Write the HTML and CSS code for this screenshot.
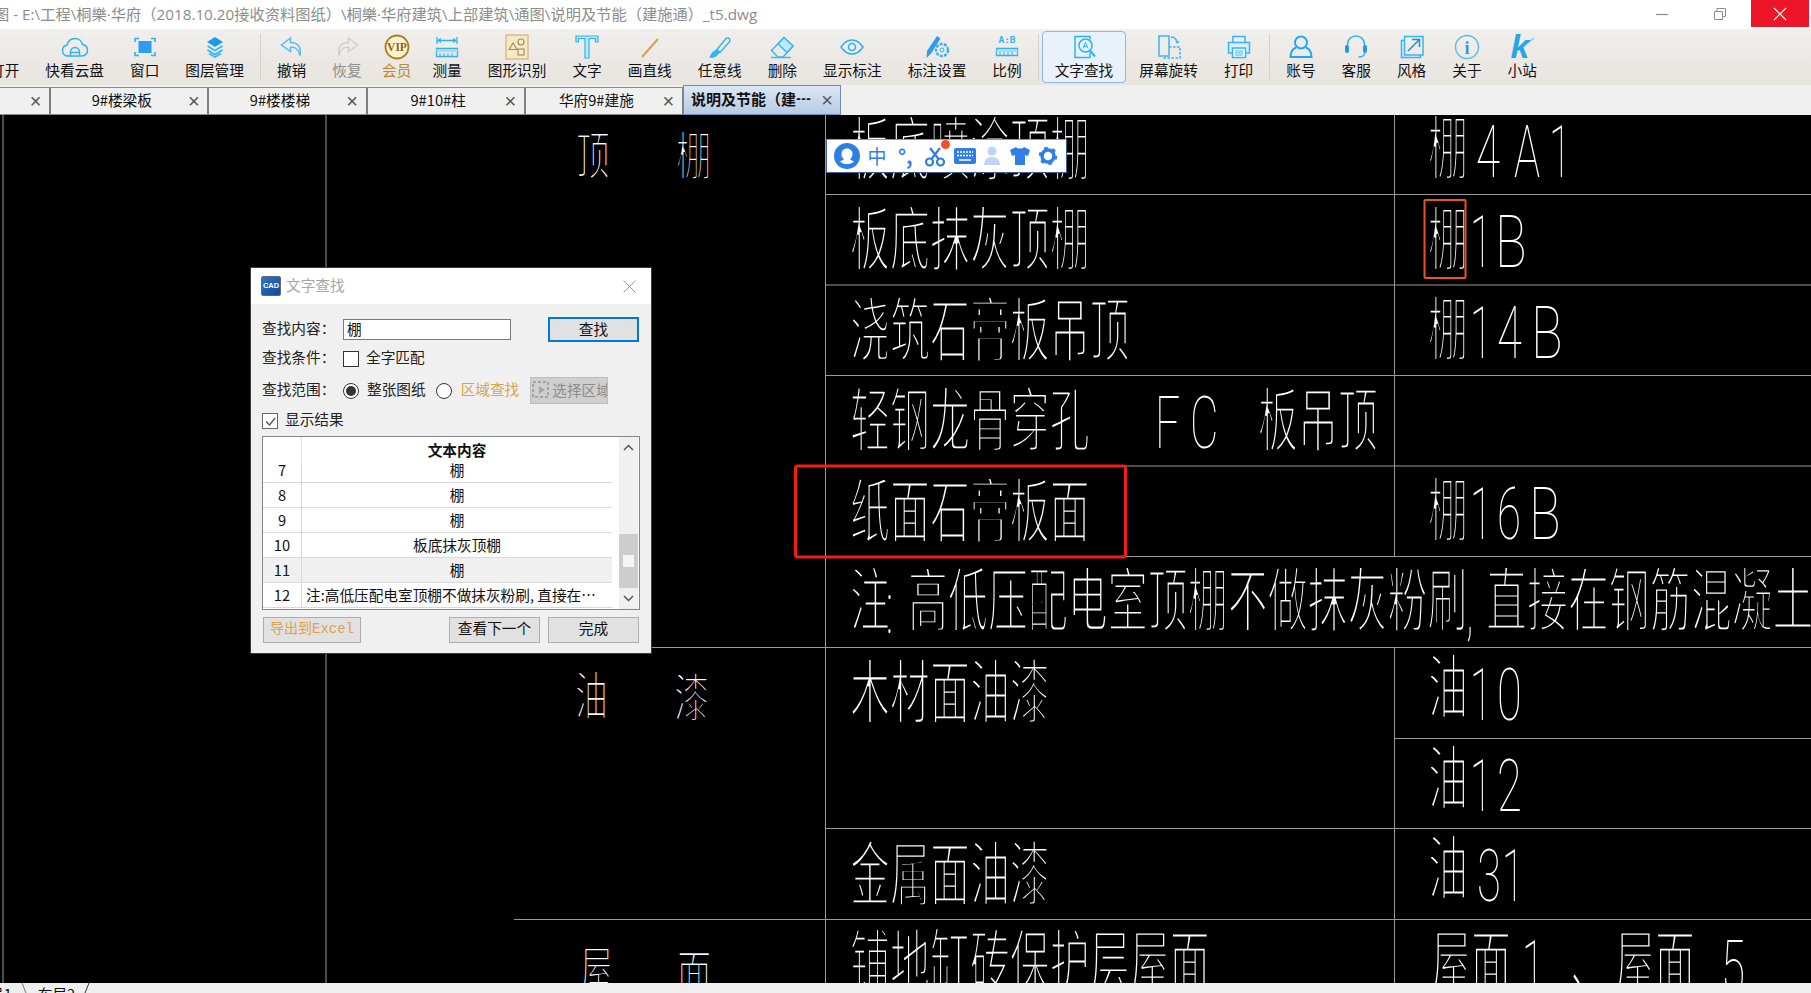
FILE: index.html
```html
<!DOCTYPE html>
<html lang="zh-CN">
<head>
<meta charset="utf-8">
<title>文字查找</title>
<link rel="stylesheet" href="styles.css">
</head>
<body>
<div class="app">
  <header class="titlebar">
    <div class="title">图 - E:\工程\桐樂·华府（2018.10.20接收资料图纸）\桐樂·华府建筑\上部建筑\通图\说明及节能（建施通）_t5.dwg</div>
    <div class="winctl">
      <svg class="wc wc-min" width="14" height="14" viewBox="0 0 14 14"><path d="M1 7.500h12" stroke="#8e8e8e" stroke-width="1.200"/></svg>
      <svg class="wc wc-max" width="14" height="14" viewBox="0 0 14 14"><path d="M1.500 4.500h8v8h-8zM4 4.500V1.500h8.500v8H9.500" fill="none" stroke="#8e8e8e"/></svg>
      <div class="wc-close"><svg width="14" height="14" viewBox="0 0 14 14"><path d="M1 1l12 12M13 1L1 13" stroke="#fff" stroke-width="1.200"/></svg></div>
    </div>
  </header>

  <nav class="toolbar">
    <div class="tool"><span class="ic"></span><span class="lb">打开</span></div>
    <div class="tool"><span class="ic"><svg width="28" height="24" viewBox="0 0 28 24" fill="none" stroke="#2db2f2" stroke-width="1.500"><path d="M7 21c-3.500 0-5.500-2.500-5.500-5.500 0-3 2-5 4.500-5.300C7 6 10 3.500 14 3.500c4 0 7 2.700 7.700 6.300 2.800.3 4.800 2.600 4.800 5.500 0 3-2.200 5.700-5.500 5.700z"/><path d="M9.500 20.500v-3.500c0-2.500 2-4.500 4.500-4.500s4.500 2 4.500 4.500v3.500M9.500 17.500h9"/></svg></span><span class="lb">快看云盘</span></div>
    <div class="tool"><span class="ic"><svg width="26" height="24" viewBox="0 0 26 24" fill="none" stroke="#2db2f2" stroke-width="1.600"><path d="M3 7V3.500h4M19 3.500h4V7M23 17v3.500h-4M7 20.500H3V17"/><rect x="6.500" y="6" width="13" height="12" fill="#2d9df2" stroke="none"/></svg></span><span class="lb">窗口</span></div>
    <div class="tool"><span class="ic"><svg width="26" height="24" viewBox="0 0 26 24"><path d="M13 2l8 5-8 5-8-5z" fill="#1e9be8"/><path d="M5.500 11l7.500 4.500 7.500-4.500M5.500 15l7.500 4.500 7.500-4.500M7 18.500l6 3.500 6-3.500" fill="none" stroke="#35b5f5" stroke-width="1.800"/></svg></span><span class="lb">图层管理</span></div>
    <span class="sep"></span>
    <div class="tool"><span class="ic"><svg width="26" height="24" viewBox="0 0 26 24" fill="none" stroke="#57bdf2" stroke-width="1.500"><path d="M11.500 3L2.500 10l9 6.500v-4.200c5.500-.5 8 2 9.500 8.200 1.500-7.500-1.500-13-9.500-13z"/></svg></span><span class="lb">撤销</span></div>
    <div class="tool"><span class="ic"><svg width="26" height="24" viewBox="0 0 26 24" fill="none" stroke="#cfcfcf" stroke-width="1.500"><path d="M14.500 3l9 7-9 6.500v-4.200c-5.500-.5-8 2-9.500 8.200-1.500-7.500 1.500-13 9.500-13z"/></svg></span><span class="lb dim">恢复</span></div>
    <div class="tool t-vip"><span class="ic"><svg width="26" height="26" viewBox="0 0 26 26"><circle cx="13" cy="13" r="11.500" fill="#fff3d2" stroke="#ad7e22" stroke-width="1.800"/><text x="13" y="17" text-anchor="middle" class="vip">VIP</text></svg></span><span class="lb gold">会员</span></div>
    <div class="tool t-meas"><span class="ic"><svg width="26" height="24" viewBox="0 0 26 24" fill="none" stroke="#2db2f2" stroke-width="1.300"><path d="M3 2v7M23 2v7M4 5.500h18M4 5.500l3-2M4 5.500l3 2M22 5.500l-3-2M22 5.500l-3 2"/><path d="M2.500 13.500h21v8h-21z"/><path d="M2.500 15.500h21" stroke="#a6dcf6" stroke-width="3"/><path d="M6 18v3M10 18v3M14 18v3M18 18v3" stroke-width="1"/></svg></span><span class="lb">测量</span></div>
    <div class="tool"><span class="ic"><svg width="24" height="26" viewBox="0 0 24 26"><rect x="1" y="1" width="22" height="24" fill="#f5e9c8" stroke="#c9a866"/><g fill="none" stroke="#a58a50" stroke-width="1.100"><path d="M8 9l4 6.500H4z"/><circle cx="16" cy="8" r="3"/><rect x="13" y="15" width="6" height="6"/></g></svg></span><span class="lb">图形识别</span></div>
    <div class="tool"><span class="ic"><svg width="26" height="26" viewBox="0 0 26 26"><path d="M2 2h22v6h-2.500V4.500H15V24h-4V4.500H4.500V8H2z" fill="#bfe8fb" stroke="#2db2f2" stroke-width="1.200"/></svg></span><span class="lb">文字</span></div>
    <div class="tool"><span class="ic"><svg width="26" height="24" viewBox="0 0 26 24"><path d="M5 22L21 4" stroke="#c9a557" stroke-width="2"/></svg></span><span class="lb">画直线</span></div>
    <div class="tool"><span class="ic"><svg width="26" height="24" viewBox="0 0 26 24" fill="none" stroke="#35b5f5" stroke-width="1.500"><path d="M10 14.500L19 3.500c1-1 2.500-.5 3.300.3.800.8 1 2 .2 3L13 17.500z"/><path d="M9.500 15l-4 3-2 4c3 0 5.500-1 6.500-2.500l2.500-2.500" fill="#35b5f5"/></svg></span><span class="lb">任意线</span></div>
    <div class="tool"><span class="ic"><svg width="26" height="24" viewBox="0 0 26 24" fill="none" stroke="#35b5f5" stroke-width="1.400"><path d="M15 2.500l9 8.500-10 11H9L2.500 15.500z"/><path d="M15 2.500l9 8.500-6 6.500-9-8.500z" fill="#bfe8fb"/><path d="M2 22.500h20"/></svg></span><span class="lb">删除</span></div>
    <div class="tool"><span class="ic"><svg width="26" height="24" viewBox="0 0 26 24" fill="none" stroke="#2db2f2" stroke-width="1.500"><path d="M2 12c3-4.500 7-7 11-7s8 2.500 11 7c-3 4.500-7 7-11 7s-8-2.500-11-7z"/><circle cx="13" cy="12" r="3.500"/></svg></span><span class="lb">显示标注</span></div>
    <div class="tool"><span class="ic"><svg width="26" height="26" viewBox="0 0 26 26"><path d="M13 2l3.500 2.500L7.500 19 2.500 24l.5-7z" fill="#2d9df2"/><circle cx="18" cy="16" r="6" fill="#eeece8" stroke="#2db2f2" stroke-width="2.400" stroke-dasharray="3 1.200"/><circle cx="18" cy="16" r="2" fill="none" stroke="#2db2f2"/></svg></span><span class="lb">标注设置</span></div>
    <div class="tool"><span class="ic"><svg width="26" height="26" viewBox="0 0 26 26"><text x="13" y="9" text-anchor="middle" class="ab">A:B</text><path d="M2.500 14.500h21v7h-21z" fill="none" stroke="#2db2f2" stroke-width="1.300"/><path d="M2.500 17h21" stroke="#a6dcf6" stroke-width="2"/><path d="M6 18v3M10 18v3M14 18v3M18 18v3" stroke="#2db2f2"/></svg></span><span class="lb">比例</span></div>
    <span class="sep sep-b"></span>
    <div class="tool tool-on"><span class="ic"><svg width="26" height="26" viewBox="0 0 26 26" fill="none" stroke="#2db2f2" stroke-width="1.500"><path d="M19 18.500v5H4V2.500h15v3"/><circle cx="14.500" cy="11.500" r="6.500" fill="#eaf3fd"/><path d="M19 16.500l5 6" stroke-width="2"/><path d="M12 14.500l2.500-6 2.500 6M13 12.500h3" stroke-width="1"/></svg></span><span class="lb">文字查找</span></div>
    <div class="tool"><span class="ic"><svg width="26" height="26" viewBox="0 0 26 26" fill="none" stroke="#35b5f5" stroke-width="1.500"><path d="M3 2h10v20H3z"/><path d="M13 13h11v11H8v-2" stroke-dasharray="2.500 1.500"/><path d="M15 3c3 0 5 1.500 6 5M20 7l1.200 1.800L23 7.500"/></svg></span><span class="lb">屏幕旋转</span></div>
    <div class="tool"><span class="ic"><svg width="26" height="26" viewBox="0 0 26 26" fill="none" stroke="#35b5f5" stroke-width="1.500"><path d="M7 8V2.500h12V8"/><path d="M6 19H2.500V8.500h21V19H20" fill="#d6f0fc"/><path d="M6.500 14h13v9.500h-13z" fill="#fff"/><path d="M9 17h8M9 19h8M9 21h8" stroke-width="1"/></svg></span><span class="lb">打印</span></div>
    <span class="sep"></span>
    <div class="tool"><span class="ic"><svg width="26" height="26" viewBox="0 0 26 26" fill="none" stroke="#1fa8f5" stroke-width="2"><circle cx="13" cy="8.500" r="6"/><path d="M8 13.500c-3.500 1.500-5.500 4.500-5.500 9.500h21c0-5-2-8-5.500-9.500"/></svg></span><span class="lb">账号</span></div>
    <div class="tool"><span class="ic"><svg width="26" height="26" viewBox="0 0 26 26" fill="none" stroke="#35b5f5" stroke-width="1.500"><path d="M4.500 13V10.500C4.500 5.500 8 2 13 2s8.500 3.500 8.500 8.500V13M21.500 19c0 2.500-2.500 4-6 4"/><rect x="2" y="11" width="4" height="8" rx="2" fill="#1e9be8" stroke="none"/><rect x="20" y="11" width="4" height="8" rx="2" fill="#1e9be8" stroke="none"/></svg></span><span class="lb">客服</span></div>
    <div class="tool"><span class="ic"><svg width="26" height="26" viewBox="0 0 26 26" fill="none" stroke="#35b5f5" stroke-width="1.500"><path d="M5 6.500H2.500v17h19V21"/><path d="M5.500 2.500h18.500v18.500H5.500z"/><path d="M9 17L20 6M13 5.500h7.500V13" stroke="#1e8fd6"/></svg></span><span class="lb">风格</span></div>
    <div class="tool"><span class="ic"><svg width="26" height="26" viewBox="0 0 26 26"><circle cx="13" cy="13" r="11.500" fill="none" stroke="#55bcef" stroke-width="1.400"/><text x="13" y="19.500" text-anchor="middle" class="inf">i</text></svg></span><span class="lb">关于</span></div>
    <div class="tool"><span class="ic"><svg width="26" height="26" viewBox="0 0 26 26"><path d="M13 15C16 11 20 7 25 4" fill="none" stroke="#8fd4f5" stroke-width="2"/><text x="11" y="24" text-anchor="middle" class="kk">k</text></svg></span><span class="lb">小站</span></div>
  </nav>

  <div class="tabs">
    <div class="tab"><span class="tt">3</span><span class="tx">×</span></div>
    <div class="tab"><span class="tt">9#楼梁板</span><span class="tx">×</span></div>
    <div class="tab"><span class="tt">9#楼楼梯</span><span class="tx">×</span></div>
    <div class="tab"><span class="tt">9#10#柱</span><span class="tx">×</span></div>
    <div class="tab"><span class="tt">华府9#建施</span><span class="tx">×</span></div>
    <div class="tab tab-on"><span class="tt">说明及节能（建┅</span><span class="tx">×</span></div>
  </div>

  <main class="canvas">
    <svg class="cad" viewBox="0 115 1811 868" width="1811" height="868">
      <g class="ln">
        <path d="M3 115V983M326 115V983M825.500 115V983"/>
        <path d="M1394.500 115V556M1394.500 647V983"/>
        <path d="M825 194.500H1811M825 285H1811M825 375.500H1811M825 466H1811M825 556.500H1811M514 647.500H1811M1394 738.500H1811M825 828.500H1811M514 919.500H1811"/>
      </g>
      <g class="big">
        <text transform="translate(850 175) scale(.571 1)">板底喷涂顶棚</text>
        <text transform="translate(850 265) scale(.571 1)">板底抹灰顶棚</text>
        <text transform="translate(850 356) scale(.571 1)">浇筑石膏板吊顶</text>
        <text transform="translate(850 446) scale(.571 1)">轻钢龙骨穿孔</text>
        <text transform="translate(1258 446) scale(.571 1)">板吊顶</text>
        <text transform="translate(850 537) scale(.571 1)">纸面石膏板面</text>
        <text transform="translate(850 626) scale(.571 1)">注</text>
        <text transform="translate(908 626) scale(.571 1)">高低压配电室顶棚不做抹灰粉刷</text>
        <text transform="translate(1486 626) scale(.585 1)">直接在钢筋混凝土</text>
        <text transform="translate(850 718) scale(.571 1)">木材面油漆</text>
        <text transform="translate(850 900) scale(.571 1)">金属面油漆</text>
        <text transform="translate(850 988) scale(.571 1)">铺地缸砖保护层屋面</text>
        <text transform="translate(1428 174) scale(.571 1)">棚</text>
        <text transform="translate(1428 265) scale(.571 1)">棚</text>
        <text transform="translate(1428 355) scale(.571 1)">棚</text>
        <text transform="translate(1428 536) scale(.571 1)">棚</text>
        <text transform="translate(1428 713) scale(.571 1)">油</text>
        <text transform="translate(1428 804) scale(.571 1)">油</text>
        <text transform="translate(1428 894) scale(.571 1)">油</text>
        <text transform="translate(1431 988) scale(.571 1)">屋面</text>
        <text transform="translate(1570 988) scale(.571 1)">、</text>
        <text transform="translate(1615 988) scale(.571 1)">屋面</text>
      </g>
      <g class="mid">
        <text transform="translate(576 175) scale(.65 1)">顶</text>
        <text transform="translate(676 175) scale(.68 1)">棚</text>
        <text transform="translate(575 715) scale(.63 1)">油</text>
        <text transform="translate(674 717) scale(.68 1)">漆</text>
        <text transform="translate(580 990) scale(.63 1)">屋</text>
        <text transform="translate(677 993) scale(.66 1)">面</text>
      </g>
      <g class="lat">
        <text transform="translate(1476 177) scale(.6 1)">4</text>
        <text transform="translate(1514 177) scale(.6 1)">A</text>
        <text transform="translate(1549 177) scale(.55 1)">1</text>
        <text transform="translate(1470 267) scale(.55 1)">1</text>
        <text transform="translate(1495 267) scale(.72 1)">B</text>
        <text transform="translate(1470 358) scale(.55 1)">1</text>
        <text transform="translate(1497 358) scale(.62 1)">4</text>
        <text transform="translate(1531 358) scale(.72 1)">B</text>
        <text transform="translate(1155 448) scale(.6 1)">F</text>
        <text transform="translate(1190 448) scale(.6 1)">C</text>
        <text transform="translate(1470 539) scale(.55 1)">1</text>
        <text transform="translate(1497 539) scale(.6 1)">6</text>
        <text transform="translate(1529 539) scale(.72 1)">B</text>
        <text transform="translate(1470 720) scale(.55 1)">1</text>
        <text transform="translate(1497 720) scale(.62 1)">0</text>
        <text transform="translate(1470 811) scale(.55 1)">1</text>
        <text transform="translate(1497 811) scale(.62 1)">2</text>
        <text transform="translate(1477 901) scale(.6 1)">3</text>
        <text transform="translate(1502 901) scale(.55 1)">1</text>
        <text transform="translate(1522 992) scale(.55 1)">1</text>
        <text transform="translate(1721 992) scale(.6 1)">5</text>
        <text transform="translate(886 633) scale(.55 1)">:</text>
        <text transform="translate(1466 633) scale(.55 1)">,</text>
      </g>
      <rect class="mark-red" x="795.500" y="466" width="330" height="91" rx="2"/>
      <rect class="mark-org" x="1424.500" y="200" width="41" height="78" rx="1"/>
    </svg>

    <div class="ime">
      <svg width="26" height="26" viewBox="0 0 26 26"><circle cx="13" cy="13" r="13" fill="#2f7fe6"/><path d="M13 5.500c-3.500 0-5.500 2.500-5.500 5.500 0 2.500 1 4 2.500 5-1 1.500-3 1.500-4 2.500 2 2 4.500 2.500 7 2.500s5-.5 7-2.500c-1-1-3-1-4-2.500 1.500-1 2.500-2.500 2.500-5 0-3-2-5.500-5.500-5.500z" fill="#fff"/></svg>
      <span class="ime-t">中</span>
      <span class="ime-p">°,</span>
      <span class="ime-s"><svg width="22" height="22" viewBox="0 0 22 22" fill="none" stroke="#2f7fe6" stroke-width="2.200"><circle cx="5.500" cy="17" r="3.500"/><circle cx="16.500" cy="17" r="3.500"/><path d="M7.500 14L16 3M14.500 14L6 3"/></svg><i class="ime-dot"></i></span>
      <svg width="22" height="18" viewBox="0 0 22 18"><rect width="22" height="16" y="1" rx="2" fill="#2f7fe6"/><path d="M3 5h16M3 8.500h16" stroke="#fff" stroke-width="1.500" stroke-dasharray="2 1"/><path d="M5 13h12" stroke="#fff" stroke-width="1.500"/></svg>
      <svg width="18" height="20" viewBox="0 0 18 20" fill="#bcd6f7"><circle cx="9" cy="5" r="4.500"/><path d="M1 19c0-5 3-8 8-8s8 3 8 8z"/></svg>
      <svg width="22" height="20" viewBox="0 0 22 20" fill="#2f7fe6"><path d="M7 1c1 2 7 2 8 0l6 3-2 6-3-1v10H6V9l-3 1-2-6z"/></svg>
      <svg width="20" height="20" viewBox="0 0 20 20" fill="none" stroke="#2f7fe6"><circle cx="10" cy="10" r="6" stroke-width="3.500"/><circle cx="10" cy="10" r="7.800" stroke-width="3" stroke-dasharray="3.500 4.670"/></svg>
    </div>

    <section class="dlg">
      <div class="dlg-hd">
        <span class="dlg-ico">CAD</span>
        <span class="dlg-ttl">文字查找</span>
        <svg class="dlg-x" width="13" height="13" viewBox="0 0 13 13"><path d="M.5.500l12 12M12.500.500l-12 12" stroke="#9a9a9a"/></svg>
      </div>
      <div class="dlg-bd">
        <div class="r r1">
          <span class="fl">查找内容：</span>
          <span class="inp">棚</span>
          <button class="btn btn-pri">查找</button>
        </div>
        <div class="r r2">
          <span class="fl">查找条件：</span>
          <span class="chk"></span>
          <span class="opt">全字匹配</span>
        </div>
        <div class="r r3">
          <span class="fl">查找范围：</span>
          <span class="rad rad-on"></span>
          <span class="opt opt-a">整张图纸</span>
          <span class="rad"></span>
          <span class="opt opt-b gold2">区域查找</span>
          <span class="btn-dis"><svg width="17" height="17" viewBox="0 0 17 17"><path d="M1 1h15v15H1z" fill="none" stroke="#a4a4a4" stroke-width="2" stroke-dasharray="3 2"/><path d="M7 5l6 4-6 4z" fill="#a4a4a4"/></svg>选择区域</span>
        </div>
        <div class="r r4">
          <span class="chk chk-on"><svg width="13" height="13" viewBox="0 0 13 13"><path d="M2 6.500l3.500 3.500L11 3" fill="none" stroke="#555" stroke-width="1.300"/></svg></span>
          <span class="opt opt-c">显示结果</span>
        </div>
        <div class="tbl">
          <div class="tbl-main">
            <div class="th"><span></span><span>文本内容</span></div>
            <div class="rows">
              <div class="tr"><span>7</span><span>棚</span></div>
              <div class="tr"><span>8</span><span>棚</span></div>
              <div class="tr"><span>9</span><span>棚</span></div>
              <div class="tr"><span>10</span><span>板底抹灰顶棚</span></div>
              <div class="tr tr-sel"><span>11</span><span>棚</span></div>
              <div class="tr"><span>12</span><span class="td-l">注:高低压配电室顶棚不做抹灰粉刷, 直接在钢筋混凝土上</span></div>
            </div>
          </div>
          <div class="sb">
            <svg class="sb-a" width="11" height="8" viewBox="0 0 11 8"><path d="M1 6.500l4.500-4.500 4.500 4.500" fill="none" stroke="#555" stroke-width="1.500"/></svg>
            <div class="sb-t"><i></i></div>
            <svg class="sb-a" width="11" height="8" viewBox="0 0 11 8"><path d="M1 1.500l4.500 4.500 4.500-4.500" fill="none" stroke="#555" stroke-width="1.500"/></svg>
          </div>
        </div>
        <div class="r r5">
          <button class="btn btn-x">导出到Excel</button>
          <button class="btn btn-n">查看下一个</button>
          <button class="btn btn-d">完成</button>
        </div>
      </div>
    </section>
  </main>

  <footer class="sheets">
    <span class="sh1">局1</span>
    <svg class="sh-l" width="6" height="10" viewBox="0 0 6 10"><path d="M1 0l4 10" stroke="#777"/></svg>
    <span class="sh2">布局2</span>
    <svg class="sh-r" width="6" height="10" viewBox="0 0 6 10"><path d="M5 0L1 10" stroke="#333"/></svg>
  </footer>
</div>
</body>
</html>
```

FILE: styles.css
```css
* { box-sizing: border-box; }
html, body { margin: 0; padding: 0; height: 100%; overflow: hidden; background: #fff; }
body { font-family: "Noto Sans CJK SC", "Liberation Sans", sans-serif; font-size: 14.67px; color: #111; }
.app { width: 1811px; height: 993px; display: flex; flex-direction: column; overflow: hidden; }

.titlebar { height: 29px; flex: none; display: flex; align-items: flex-start; background: #fff; position: relative; }
.title { margin-left: -6px; line-height: 28px; font-family: "Open Sans", "Noto Sans CJK SC", sans-serif; font-size: 15.250px; color: #8c8c8c; white-space: nowrap; flex: 1; }
.winctl { display: flex; align-items: flex-start; margin-right: 2px; }
.wc { margin-top: 7px; }
.wc-min { margin-right: 44px; }
.wc-max { margin-right: 24px; }
.wc-close { width: 58px; height: 27px; background: #ed1528; display: flex; align-items: center; justify-content: center; }

.toolbar { height: 56px; flex: none; display: flex; align-items: stretch; margin-left: -23px; width: 1834px; background: linear-gradient(#f1efec, #e8e4df); }
.tool { display: flex; flex-direction: column; align-items: center; padding: 0 13px; white-space: nowrap; }
.t-vip { padding: 0 10px 0 7.500px; }
.t-meas { padding-left: 11px; }
.ic { height: 26px; margin-top: 5px; display: flex; align-items: center; justify-content: center; }
.lb { font-size: 14.67px; line-height: 18px; margin-top: 1px; color: #111; }
.dim { color: #8f8f8f; }
.gold { color: #bd8a2c; }
.sep { width: 1px; margin: 5px 3px 5px 3px; background: #d4d2cf; flex: none; }
.tool-on { background: #e9f1fb; border: 1px solid #8cb6f0; border-radius: 4px; margin: 2px 0; padding: 0 12px; }
.tool-on .ic { margin-top: 2px; }
.tool-on .lb { margin-top: 1px; }
.vip { font-family: "Liberation Serif", serif; font-weight: 700; font-size: 11.500px; fill: #8f6310; }
.ab { font-family: "DejaVu Sans Mono", monospace; font-weight: 700; font-size: 9.500px; fill: #2db2f2; }
.inf { font-family: "Liberation Serif", serif; font-weight: 700; font-size: 18px; fill: #2a9fe0; }
.kk { font-family: "Liberation Sans", sans-serif; font-weight: 700; font-style: italic; font-size: 34px; fill: #26a6e6; }

.tabs { height: 30px; flex: none; display: flex; background: #f0f0f0; margin-left: -107px; width: 1918px; }
.tab { width: 158.200px; height: 28px; margin-top: 2px; display: flex; align-items: center; background: #f0f0f0; border-top: 1px solid #8a8a8a; border-right: 2px solid #7f7f7f; border-bottom: 1px solid #8a8a8a; flex: none; }
.tt { flex: 1; text-align: center; font-size: 14.67px; line-height: 20px; padding: 0 0 3px 12px; white-space: nowrap; }
.tx { width: 27px; text-align: center; font-size: 20px; line-height: 20px; color: #555; font-family: "Liberation Sans", sans-serif; flex: none; }
.tab-on { height: 30px; margin-top: 0; margin-left: -1px; background: linear-gradient(#dce7f5, #b6cbe4); border: 1px solid #6b8dbe; }
.tab-on .tt { font-weight: 700; text-align: left; padding-left: 7px; font-size: 15px; }
.tab-on .tx { width: 26px; }

.canvas { flex: 1; min-height: 0; position: relative; background: #000; overflow: hidden; }
.cad { display: block; }
.ln path { fill: none; stroke: #9a9a9a; stroke-width: 1; }
.big text, .mid text, .lat text { fill: #fff; paint-order: fill stroke; stroke: #000; }
.big text { font-family: "Noto Sans CJK SC", sans-serif; font-size: 70px; stroke-width: 3.100px; }
.mid text { font-family: "Noto Sans CJK SC", sans-serif; font-size: 52px; stroke-width: 2.200px; }
.lat text { font-family: Roboto, "Liberation Sans", sans-serif; font-weight: 100; font-size: 73px; stroke: none; }
.mark-red { fill: none; stroke: #f01e14; stroke-width: 3; }
.mark-org { fill: none; stroke: #e8590c; stroke-width: 2; }

.ime { position: absolute; left: 826px; top: 24px; width: 241px; height: 34px; display: flex; align-items: center; justify-content: space-between; padding: 0 8px 0 7px; background: #fff; border: 1px solid #3c5f94; border-top-color: #7f9cc6; }
.ime-t { font-size: 19px; line-height: 26px; font-weight: 400; color: #2f7fe6; margin-right: 4px; }
.ime-p { font-size: 20px; line-height: 26px; font-weight: 700; color: #2f7fe6; }
.ime-s { position: relative; display: flex; margin-left: 4px; }
.ime-dot { position: absolute; right: -4px; top: -5px; width: 9px; height: 9px; border-radius: 50%; background: #f4502a; }

.dlg { position: absolute; left: 250px; top: 152px; width: 402px; height: 387px; background: #f0f0f0; border: 1px solid #3a3a3a; display: flex; flex-direction: column; }
.dlg-hd { height: 36px; flex: none; background: #fff; display: flex; align-items: center; padding: 0 15px 0 10px; }
.dlg-ico { width: 20px; height: 20px; background: linear-gradient(135deg, #2a75c8, #134a96); border: 1px solid #667; border-radius: 2px; color: #fff; font-family: "Liberation Sans", sans-serif; font-size: 7.500px; line-height: 18px; text-align: center; font-weight: 700; flex: none; }
.dlg-ttl { margin-left: 5px; color: #a6a6a6; font-size: 14.67px; line-height: 20px; padding-bottom: 3px; flex: 1; }
.dlg-bd { flex: 1; display: flex; flex-direction: column; padding: 13px 12px 0 11px; }
.r { display: flex; align-items: center; flex: none; }
.r1 { height: 25px; }
.r2 { height: 16px; margin-top: 9px; }
.r3 { height: 27px; margin-top: 10px; }
.r4 { height: 16px; margin-top: 9px; }
.r5 { height: 26px; margin-top: 7px; }
.fl { width: 81px; flex: none; font-size: 14.67px; line-height: 20px; padding-bottom: 4px; color: #222; white-space: nowrap; }
.inp { width: 168px; height: 21px; background: #fff; border: 1px solid #7a7a7a; font-size: 14.67px; line-height: 17px; padding-left: 3px; }
.btn { font-family: inherit; font-size: 14.67px; height: 25px; width: 91px; padding: 0 0 4px; background: #e1e1e1; border: 1px solid #adadad; color: #111; line-height: 20px; }
.btn-pri { margin-left: auto; border: 2px solid #0078d7; }
.chk { width: 16px; height: 16px; background: #fff; border: 1px solid #333; flex: none; display: flex; align-items: center; justify-content: center; }
.opt { font-size: 14.67px; line-height: 20px; padding-bottom: 4px; white-space: nowrap; color: #222; margin-left: 7px; }
.rad { width: 16px; height: 16px; border-radius: 50%; border: 1px solid #333; background: #fff; flex: none; display: flex; align-items: center; justify-content: center; }
.rad-on::before { content: ""; width: 10px; height: 10px; border-radius: 50%; background: #333; }
.opt-a { margin: 0 10px 0 8px; }
.opt-b { margin: 0 11px 0 9px; }
.gold2 { color: #e0a24a; }
.btn-dis { width: 78px; height: 27px; background: #cfcfcf; border: 1px solid #bdbdbd; color: #8c8c8c; font-size: 14.67px; display: flex; align-items: center; gap: 3px; white-space: nowrap; overflow: hidden; padding: 0 0 2px 1px; }
.btn-dis svg { flex: none; }
.chk-on { border-color: #666; }
.opt-c { margin-left: 7px; }

.tbl { height: 174px; width: 378px; margin-top: 7px; flex: none; display: flex; background: #fff; border: 1px solid #84848f; }
.tbl-main { width: 356px; flex: none; overflow: hidden; position: relative; }
.th { height: 26px; position: relative; z-index: 1; background: #fff; display: grid; grid-template-columns: 39px 310px; font-weight: 700; font-size: 14.67px; line-height: 26px; text-align: center; }
.th span:first-child { border-right: 1px solid #e4e4e4; }
.rows { margin-top: -5px; }
.tr { height: 25px; width: 349px; display: grid; grid-template-columns: 39px 310px; border-bottom: 1px solid #d9d9d9; font-size: 14.67px; line-height: 24px; text-align: center; background: #fff; }
.tr span:first-child { border-right: 1px solid #d9d9d9; }
.tr-sel { background: #f0f0f0; }
.td-l { text-align: left; padding: 0 4px; white-space: nowrap; overflow: hidden; text-overflow: ellipsis; }
.sb { width: 19px; flex: none; display: flex; flex-direction: column; align-items: center; background: #f0f0f0; }
.sb-a { height: 21px; flex: none; }
.sb-t { flex: 1; width: 100%; display: flex; align-items: flex-end; }
.sb-t i { display: flex; width: 100%; height: 54px; background: #cdcdcd; align-items: center; justify-content: center; }
.sb-t i::before { content: ""; width: 11px; height: 12px; background: #f5f5f5; }

.btn-x { width: 98px; height: 26px; margin-left: 1px; color: #e0a24a; font-family: "Liberation Mono", "Noto Sans CJK SC", monospace; font-size: 14px; padding-bottom: 2px; }
.btn-n { width: 91px; height: 26px; margin-left: auto; }
.btn-d { width: 91px; height: 26px; margin-left: 8px; }

.sheets { height: 10px; flex: none; background: #efefef; display: flex; align-items: flex-start; overflow: hidden; font-size: 14.67px; line-height: 15px; position: relative; }
.sh1 { margin-left: -11px; margin-top: 3px; }
.sh-l { margin-left: 9px; }
.sh2 { margin-left: 11px; margin-top: 3px; }
.sh-r { margin-left: 9px; }
```
